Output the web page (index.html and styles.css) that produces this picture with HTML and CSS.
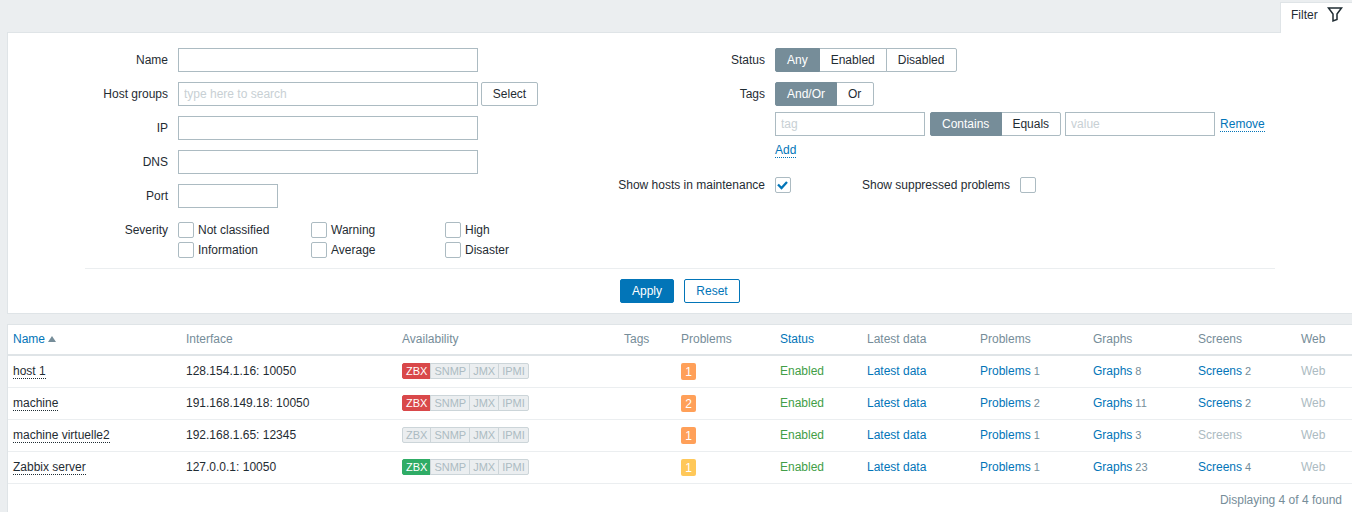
FILE: index.html
```html
<!DOCTYPE html>
<html lang="en">
<head>
    <meta charset="UTF-8">
    <title>Hosts</title>
    <link rel="stylesheet" href="styles.css">
</head>
<body>
    <div class="tabs">
        <div class="tab">
            <span>Filter</span>
            <svg class="tab-icon" width="16" height="16" viewBox="0 0 16 16"><path d="M1.5 1h13L10 7v5.5L6 14V7z" fill="none" stroke="#1f2c33" stroke-width="1.5"/></svg>
        </div>
    </div>

    <form class="filter">
        <div class="filter-cols">
            <div class="form-list left">
                <label>Name</label>
                <div><input type="text" class="w300"></div>

                <label>Host groups</label>
                <div class="inline">
                    <input type="text" class="w300" placeholder="type here to search">
                    <button type="button" class="btn-alt select">Select</button>
                </div>

                <label>IP</label>
                <div><input type="text" class="w300"></div>

                <label>DNS</label>
                <div><input type="text" class="w300"></div>

                <label>Port</label>
                <div><input type="text" class="w100"></div>

                <label class="severity-label">Severity</label>
                <div class="severity">
                    <div class="check"><span class="box"></span>Not classified</div>
                    <div class="check"><span class="box"></span>Warning</div>
                    <div class="check"><span class="box"></span>High</div>
                    <div class="check"><span class="box"></span>Information</div>
                    <div class="check"><span class="box"></span>Average</div>
                    <div class="check"><span class="box"></span>Disaster</div>
                </div>
            </div>

            <div class="form-list right">
                <label>Status</label>
                <div class="segmented">
                    <span class="seg on">Any</span><span class="seg">Enabled</span><span class="seg">Disabled</span>
                </div>

                <label>Tags</label>
                <div class="tags">
                    <div class="segmented">
                        <span class="seg on">And/Or</span><span class="seg">Or</span>
                    </div>
                    <div class="inline tag-row">
                        <input type="text" class="w150" placeholder="tag">
                        <div class="segmented">
                            <span class="seg on">Contains</span><span class="seg">Equals</span>
                        </div>
                        <input type="text" class="w150 value" placeholder="value">
                        <a class="link dotted">Remove</a>
                    </div>
                    <div class="add-row"><a class="link dotted">Add</a></div>
                </div>

                <label class="maint-label">Show hosts in maintenance</label>
                <div class="maint">
                    <span class="box checked">
                        <svg width="14" height="14" viewBox="0 0 14 14"><path d="M2 6.5l3.5 3.5 5.5-6" fill="none" stroke="#0275b8" stroke-width="2.3"/></svg>
                    </span>
                    <span class="suppressed">Show suppressed problems</span>
                    <span class="box"></span>
                </div>
            </div>
        </div>

        <div class="filter-actions">
            <button type="button" class="btn-main">Apply</button>
            <button type="button" class="btn-alt reset">Reset</button>
        </div>
    </form>

    <div class="results">
        <table>
            <colgroup>
                <col class="c-name"><col class="c-iface"><col class="c-avail"><col class="c-tags"><col class="c-prob">
                <col class="c-status"><col class="c-latest"><col class="c-problems"><col class="c-graphs"><col class="c-screens"><col>
            </colgroup>
            <thead>
                <tr>
                    <th><a class="link">Name</a><span class="sort-up"></span></th>
                    <th>Interface</th>
                    <th>Availability</th>
                    <th>Tags</th>
                    <th>Problems</th>
                    <th><a class="link">Status</a></th>
                    <th>Latest data</th>
                    <th>Problems</th>
                    <th>Graphs</th>
                    <th>Screens</th>
                    <th>Web</th>
                </tr>
            </thead>
            <tbody>
                <tr>
                    <td><a class="host">host 1</a></td>
                    <td>128.154.1.16: 10050</td>
                    <td><div class="avail"><span class="red">ZBX</span><span>SNMP</span><span>JMX</span><span>IPMI</span></div></td>
                    <td></td>
                    <td><span class="badge orange">1</span></td>
                    <td class="enabled">Enabled</td>
                    <td><a class="link">Latest data</a></td>
                    <td><a class="link">Problems</a><sup>1</sup></td>
                    <td><a class="link">Graphs</a><sup>8</sup></td>
                    <td><a class="link">Screens</a><sup>2</sup></td>
                    <td class="off">Web</td>
                </tr>
                <tr>
                    <td><a class="host">machine</a></td>
                    <td>191.168.149.18: 10050</td>
                    <td><div class="avail"><span class="red">ZBX</span><span>SNMP</span><span>JMX</span><span>IPMI</span></div></td>
                    <td></td>
                    <td><span class="badge orange">2</span></td>
                    <td class="enabled">Enabled</td>
                    <td><a class="link">Latest data</a></td>
                    <td><a class="link">Problems</a><sup>2</sup></td>
                    <td><a class="link">Graphs</a><sup>11</sup></td>
                    <td><a class="link">Screens</a><sup>2</sup></td>
                    <td class="off">Web</td>
                </tr>
                <tr>
                    <td><a class="host">machine virtuelle2</a></td>
                    <td>192.168.1.65: 12345</td>
                    <td><div class="avail"><span>ZBX</span><span>SNMP</span><span>JMX</span><span>IPMI</span></div></td>
                    <td></td>
                    <td><span class="badge orange">1</span></td>
                    <td class="enabled">Enabled</td>
                    <td><a class="link">Latest data</a></td>
                    <td><a class="link">Problems</a><sup>1</sup></td>
                    <td><a class="link">Graphs</a><sup>3</sup></td>
                    <td class="off">Screens</td>
                    <td class="off">Web</td>
                </tr>
                <tr>
                    <td><a class="host">Zabbix server</a></td>
                    <td>127.0.0.1: 10050</td>
                    <td><div class="avail"><span class="green">ZBX</span><span>SNMP</span><span>JMX</span><span>IPMI</span></div></td>
                    <td></td>
                    <td><span class="badge yellow">1</span></td>
                    <td class="enabled">Enabled</td>
                    <td><a class="link">Latest data</a></td>
                    <td><a class="link">Problems</a><sup>1</sup></td>
                    <td><a class="link">Graphs</a><sup>23</sup></td>
                    <td><a class="link">Screens</a><sup>4</sup></td>
                    <td class="off">Web</td>
                </tr>
            </tbody>
        </table>
        <div class="paging">Displaying 4 of 4 found</div>
    </div>
</body>
</html>
```

FILE: styles.css
```css
* {
    box-sizing: border-box;
}

html, body {
    height: 512px;
    overflow: hidden;
}

body {
    margin: 0;
    padding: 2px 0 0 7px;
    background-color: #ebeef0;
    color: #1f2c33;
    font-family: "Liberation Sans", Arial, sans-serif;
    font-size: 12px;
    line-height: 14px;
}

a {
    cursor: pointer;
}

.link {
    color: #0275b8;
}

.dotted {
    border-bottom: 1px dotted #0275b8;
}

/* filter tab */
.tabs {
    display: flex;
    justify-content: flex-end;
    height: 31px;
    margin-bottom: -1px;
    position: relative;
}

.tab {
    display: flex;
    align-items: flex-start;
    width: 72px;
    height: 31px;
    padding: 5px 0 0 10px;
    background-color: #fff;
    border: 1px solid #dfe4e7;
    border-bottom: 0;
    border-right: 0;
}

.tab-icon {
    margin: -1px 0 0 9px;
}

/* filter form */
.filter {
    height: 282px;
    padding-top: 15px;
    background-color: #fff;
    border: 1px solid #dfe4e7;
    border-right: 0;
}

.filter-cols {
    display: flex;
    height: 220px;
}

.form-list {
    display: grid;
    column-gap: 10px;
    align-content: start;
    align-items: start;
}

.form-list.left {
    grid-template-columns: 160px 1fr;
    grid-auto-rows: minmax(24px, auto);
    row-gap: 10px;
    width: 597px;
}

.form-list.right {
    grid-template-columns: 160px 1fr;
    row-gap: 10px;
}

.form-list > label {
    text-align: right;
    padding-top: 5px;
}

.inline {
    display: flex;
    align-items: center;
    gap: 3px;
}

input {
    display: block;
    height: 24px;
    padding: 0 5px;
    background: #fff;
    border: 1px solid #acbbc2;
    color: #1f2c33;
    font: inherit;
    outline: 0;
}

input::placeholder {
    color: #c8d0d4;
    opacity: 1;
}

.w300 { width: 300px; }
.w150 { width: 150px; }
.w100 { width: 100px; }

button {
    height: 24px;
    padding: 0 11px;
    font: inherit;
    border-radius: 2px;
    cursor: pointer;
}

.btn-alt {
    background: #fff;
    border: 1px solid #0275b8;
    color: #0275b8;
}

.btn-alt.select {
    width: 57px;
    padding: 0;
    border-color: #acbbc2;
    color: #1f2c33;
}

.btn-main {
    width: 54px;
    background: #0275b8;
    border: 1px solid #0275b8;
    color: #fff;
}

/* severity checks */
.severity-label {
    padding-top: 5px !important;
}

.severity {
    display: grid;
    grid-template-columns: 133px 134px 1fr;
    grid-auto-rows: 16px;
    row-gap: 4px;
    margin-top: 4px;
}

.check {
    display: flex;
    align-items: center;
}

.box {
    display: inline-flex;
    align-items: center;
    justify-content: center;
    flex: none;
    width: 16px;
    height: 16px;
    margin-right: 4px;
    background: #fff;
    border: 1px solid #acbbc2;
    border-radius: 2px;
}

.box svg {
    display: block;
}

/* segmented controls */
.segmented {
    display: inline-flex;
    height: 24px;
}

.seg {
    padding: 4px 11px 0;
    margin-left: -1px;
    height: 24px;
    background: #fff;
    border: 1px solid #acbbc2;
}

.seg:first-child {
    margin-left: 0;
    border-radius: 2px 0 0 2px;
}

.seg:last-child {
    padding-right: 12px;
    border-radius: 0 2px 2px 0;
}

.seg.on {
    position: relative;
    background: #768d99;
    border-color: #768d99;
    color: #fff;
}

.tags {
    display: flex;
    flex-direction: column;
    align-items: flex-start;
}

.tag-row {
    gap: 5px;
    margin-top: 6px;
}

.tag-row .seg.on {
    padding-right: 12px;
}

.tag-row .seg:last-child {
    margin-left: -2px;
    padding-right: 11px;
}

.value {
    margin-left: -1px;
}

.add-row {
    margin-top: 7px;
    height: 15px;
}

.maint-label {
    padding-top: 0 !important;
    margin-top: 10px;
}

.maint {
    display: flex;
    align-items: center;
    margin-top: 9px;
}

.suppressed {
    margin: 0 10px 0 67px;
}

.filter-actions {
    display: flex;
    justify-content: center;
    gap: 10px;
    margin: 0 77px;
    padding-top: 10px;
    border-top: 1px solid #ebeef0;
}

.filter-actions .reset {
    width: 56px;
    padding: 0;
}

/* hosts table */
.results {
    margin-top: 10px;
    background: #fff;
    border: 1px solid #dfe4e7;
    border-right: 0;
    border-bottom: 0;
    height: 190px;
}

table {
    width: 100%;
    table-layout: fixed;
    border-collapse: separate;
    border-spacing: 0;
}

.c-name { width: 173px; }
.c-iface { width: 216px; }
.c-avail { width: 222px; }
.c-tags { width: 57px; }
.c-prob { width: 99px; }
.c-status { width: 87px; }
.c-latest { width: 113px; }
.c-problems { width: 113px; }
.c-graphs { width: 105px; }
.c-screens { width: 103px; }

th {
    height: 31px;
    padding: 0 5px 1px;
    text-align: left;
    font-weight: normal;
    color: #768d99;
    border-bottom: 2px solid #dfe4e7;
}

td {
    height: 32px;
    padding: 8px 5px 0;
    vertical-align: top;
    border-bottom: 1px solid #ebeef0;
    white-space: nowrap;
}

.sort-up {
    display: inline-block;
    margin-left: 3px;
    vertical-align: 1px;
    border-left: 4px solid transparent;
    border-right: 4px solid transparent;
    border-bottom: 6px solid #768d99;
}

.host {
    border-bottom: 1px dotted #1f2c33;
}

.avail {
    display: flex;
    width: 127px;
    margin-top: -1px;
}

.avail span {
    height: 16px;
    padding: 0 3px;
    margin-left: -1px;
    background: #ebeef0;
    border: 1px solid #ccd5d9;
    color: #acbbc2;
    font-size: 11px;
    line-height: 14px;
}

.avail span:first-child {
    margin-left: 0;
    border-radius: 2px 0 0 2px;
}

.avail span:last-child {
    border-radius: 0 2px 2px 0;
}

.avail .red {
    background: #d9484a;
    border-color: #d9484a;
    color: #fff;
}

.avail .green {
    background: #2fac66;
    border-color: #2fac66;
    color: #fff;
}

.badge {
    display: block;
    width: 15px;
    height: 17px;
    margin-top: -1px;
    border-radius: 2px;
    text-align: center;
    line-height: 18px;
    color: #fff;
}

.orange { background: #ffa059; }
.yellow { background: #ffc859; }

.enabled { color: #429e47; }
.off { color: #acbbc2; }

sup {
    margin-left: 3px;
    vertical-align: baseline;
    font-size: 11px;
    color: #768d99;
}

.paging {
    padding: 9px 10px 0 0;
    text-align: right;
    color: #768d99;
}
```
